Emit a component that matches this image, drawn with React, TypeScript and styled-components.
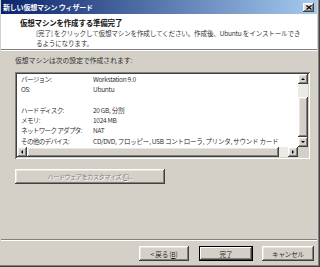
import React from 'react';
import styled, { createGlobalStyle, css } from 'styled-components';

const GlobalStyle = createGlobalStyle`
    html, body {
        margin: 0;
        padding: 0;
        background: #D4D0C8;
    }
    body {
        font-family: "Noto Sans CJK JP", "Liberation Sans", sans-serif;
        color: #222;
    }
`;

const raised = css`
    background: #D4D0C8;
    box-shadow: inset -1px -1px #404040, inset 1px 1px #FFFFFF, inset -2px -2px #808080, inset 2px 2px #E8E6E1;
`;

const Frame = styled.div`
    width: 320px;
    height: 267px;
    box-sizing: border-box;
    padding: 0 3px 2px 1px;
    background: #D4D0C8;
    box-shadow: inset -1px -1px #404040, inset -2px -2px #808080;
    overflow: hidden;
`;

const Window = styled.div`
    height: 100%;
    display: flex;
    flex-direction: column;
`;

const TitleBar = styled.div`
    height: 14px;
    flex: none;
    display: flex;
    align-items: center;
    justify-content: space-between;
    padding-left: 2px;
    background: linear-gradient(to right, #0A246A, #A6CAF0);
`;

const TitleText = styled.div`
    color: #FFFFFF;
    font-size: 7px;
    font-weight: bold;
    line-height: 14px;
    letter-spacing: -0.2px;
    white-space: nowrap;
`;

const CloseButton = styled.div`
    ${raised};
    width: 11px;
    height: 9px;
    margin-right: 3px;
    display: flex;
    align-items: center;
    justify-content: center;
`;

const Header = styled.div`
    height: 35px;
    flex: none;
    background: #FFFFFF;
    box-sizing: border-box;
    padding-top: 4px;
`;

const HeaderTitle = styled.div`
    padding-left: 19px;
    font-size: 7.5px;
    font-weight: bold;
    line-height: 10px;
    letter-spacing: -0.2px;
    white-space: nowrap;
    color: #111;
`;

const HeaderDesc = styled.div`
    padding-left: 35px;
    font-size: 6.6px;
    font-weight: 350;
    line-height: 10px;
    letter-spacing: -0.2px;
    white-space: nowrap;
    color: #1a1a1a;
`;

const Separator = styled.div`
    height: 1px;
    flex: none;
    background: #808080;
    border-bottom: 1px solid #FFFFFF;
`;

const Body = styled.div`
    flex: 1;
    padding: 4px 0 0 14px;
    display: flex;
    flex-direction: column;
`;

const IntroText = styled.div`
    font-size: 6.8px;
    font-weight: 350;
    line-height: 10px;
    white-space: nowrap;
    color: #1a1a1a;
`;

const ListBox = styled.div`
    margin-top: 7px;
    width: 295px;
    height: 87px;
    box-sizing: border-box;
    padding: 2px;
    background: #FFFFFF;
    box-shadow: inset 1px 1px #808080, inset -1px -1px #FFFFFF, inset 2px 2px #404040, inset -2px -2px #D4D0C8;
    display: grid;
    grid-template-columns: 1fr 10px;
    grid-template-rows: 1fr 10px;
`;

const ListContent = styled.div`
    overflow: hidden;
    padding-left: 4px;
`;

const InfoRow = styled.div`
    display: grid;
    grid-template-columns: 72px 1fr;
    height: 10.3px;
    font-size: 6.6px;
    font-weight: 350;
    line-height: 10.3px;
    white-space: nowrap;
    color: #222;
`;

const InfoLabel = styled.span`
    letter-spacing: -0.7px;
`;

const InfoValue = styled.span`
    letter-spacing: -0.3px;
`;

const VScroll = styled.div`
    display: flex;
    flex-direction: column;
    background: #ECEAE6;
`;

const HScroll = styled.div`
    display: flex;
    background: #ECEAE6;
`;

const Corner = styled.div`
    background: #D4D0C8;
`;

const ArrowButton = styled.div`
    ${raised};
    width: 10px;
    height: 10px;
    flex: none;
    display: flex;
    align-items: center;
    justify-content: center;
`;

const Arrow = styled.div<{ $dir: 'up' | 'down' | 'left' | 'right' }>`
    width: 0;
    height: 0;
    ${({ $dir }) => $dir === 'up' && css`
        border-left: 2px solid transparent;
        border-right: 2px solid transparent;
        border-bottom: 2px solid #000;
    `}
    ${({ $dir }) => $dir === 'down' && css`
        border-left: 2px solid transparent;
        border-right: 2px solid transparent;
        border-top: 2px solid #000;
    `}
    ${({ $dir }) => $dir === 'left' && css`
        border-top: 2px solid transparent;
        border-bottom: 2px solid transparent;
        border-right: 2px solid #000;
    `}
    ${({ $dir }) => $dir === 'right' && css`
        border-top: 2px solid transparent;
        border-bottom: 2px solid transparent;
        border-left: 2px solid #000;
    `}
`;

const Track = styled.div<{ $size?: number }>`
    ${({ $size }) => $size === undefined ? css`flex: 1;` : css`flex: none; flex-basis: ${$size}px;`}
`;

const Thumb = styled.div<{ $size: number }>`
    ${raised};
    flex: none;
    ${({ $size }) => css`flex-basis: ${$size}px;`}
`;

const CustomizeButton = styled.div`
    ${raised};
    margin-top: 10px;
    width: 150px;
    height: 15px;
    display: flex;
    align-items: center;
    justify-content: center;
    font-size: 6.2px;
    letter-spacing: -0.5px;
    color: #808080;
    text-shadow: 1px 1px #FFFFFF;
    white-space: nowrap;
`;

const Footer = styled.div`
    flex: none;
    display: flex;
    flex-direction: column;
`;

const ButtonRow = styled.div`
    display: flex;
    justify-content: flex-end;
    padding: 5px 3px 4px 0;
`;

const DialogButton = styled.div<{ $width: number; $default?: boolean; $gap?: number }>`
    ${raised};
    width: ${({ $width }) => $width}px;
    height: 15px;
    box-sizing: border-box;
    margin-left: ${({ $gap }) => $gap ?? 0}px;
    display: flex;
    align-items: center;
    justify-content: center;
    font-size: 6.6px;
    font-weight: 350;
    letter-spacing: -0.2px;
    color: #1a1a1a;
    white-space: nowrap;
    ${({ $default }) => $default && css`
        box-shadow: inset 0 0 0 1px #000, inset -2px -2px #404040, inset 2px 2px #FFFFFF, inset -3px -3px #808080;
    `}
`;

const Key = styled.span`
    text-decoration: underline;
`;

const rows: Array<[string, string]> = [
    ['バージョン:', 'Workstation 9.0'],
    ['OS:', 'Ubuntu'],
    ['', ''],
    ['ハード ディスク:', '20 GB, 分割'],
    ['メモリ:', '1024 MB'],
    ['ネットワーク アダプタ:', 'NAT'],
    ['その他のデバイス:', 'CD/DVD, フロッピー, USB コントローラ, プリンタ, サウンド カード'],
];

const App = () => {
    return (
        <>
            <GlobalStyle />
            <Frame>
                <Window>
                    <TitleBar>
                        <TitleText>新しい仮想マシン ウィザード</TitleText>
                        <CloseButton>
                            <svg width="6" height="5" viewBox="0 0 6 5">
                                <path d="M0.5 0.5 L5.5 4.5 M5.5 0.5 L0.5 4.5" stroke="#000" strokeWidth="1.2" />
                            </svg>
                        </CloseButton>
                    </TitleBar>
                    <Header>
                        <HeaderTitle>仮想マシンを作成する準備完了</HeaderTitle>
                        <HeaderDesc>[完了] をクリックして仮想マシンを作成してください。作成後、Ubuntu をインストールでき</HeaderDesc>
                        <HeaderDesc>るようになります。</HeaderDesc>
                    </Header>
                    <Separator />
                    <Body>
                        <IntroText>仮想マシンは次の設定で作成されます:</IntroText>
                        <ListBox>
                            <ListContent>
                                {rows.map(([label, value], i) => (
                                    <InfoRow key={i}>
                                        <InfoLabel>{label}</InfoLabel>
                                        <InfoValue>{value}</InfoValue>
                                    </InfoRow>
                                ))}
                            </ListContent>
                            <VScroll>
                                <ArrowButton><Arrow $dir="up" /></ArrowButton>
                                <Track $size={13} />
                                <Thumb $size={40} />
                                <Track />
                                <ArrowButton><Arrow $dir="down" /></ArrowButton>
                            </VScroll>
                            <HScroll>
                                <ArrowButton><Arrow $dir="left" /></ArrowButton>
                                <Thumb $size={252} />
                                <Track />
                                <ArrowButton><Arrow $dir="right" /></ArrowButton>
                            </HScroll>
                            <Corner />
                        </ListBox>
                        <CustomizeButton>ハードウェアをカスタマイズ (<Key>C</Key>)...</CustomizeButton>
                    </Body>
                    <Footer>
                        <Separator />
                        <ButtonRow>
                            <DialogButton $width={50}>&lt; 戻る (<Key>B</Key>)</DialogButton>
                            <DialogButton $width={54} $gap={10} $default>完了</DialogButton>
                            <DialogButton $width={52} $gap={9}>キャンセル</DialogButton>
                        </ButtonRow>
                    </Footer>
                </Window>
            </Frame>
        </>
    );
};

export default App;
